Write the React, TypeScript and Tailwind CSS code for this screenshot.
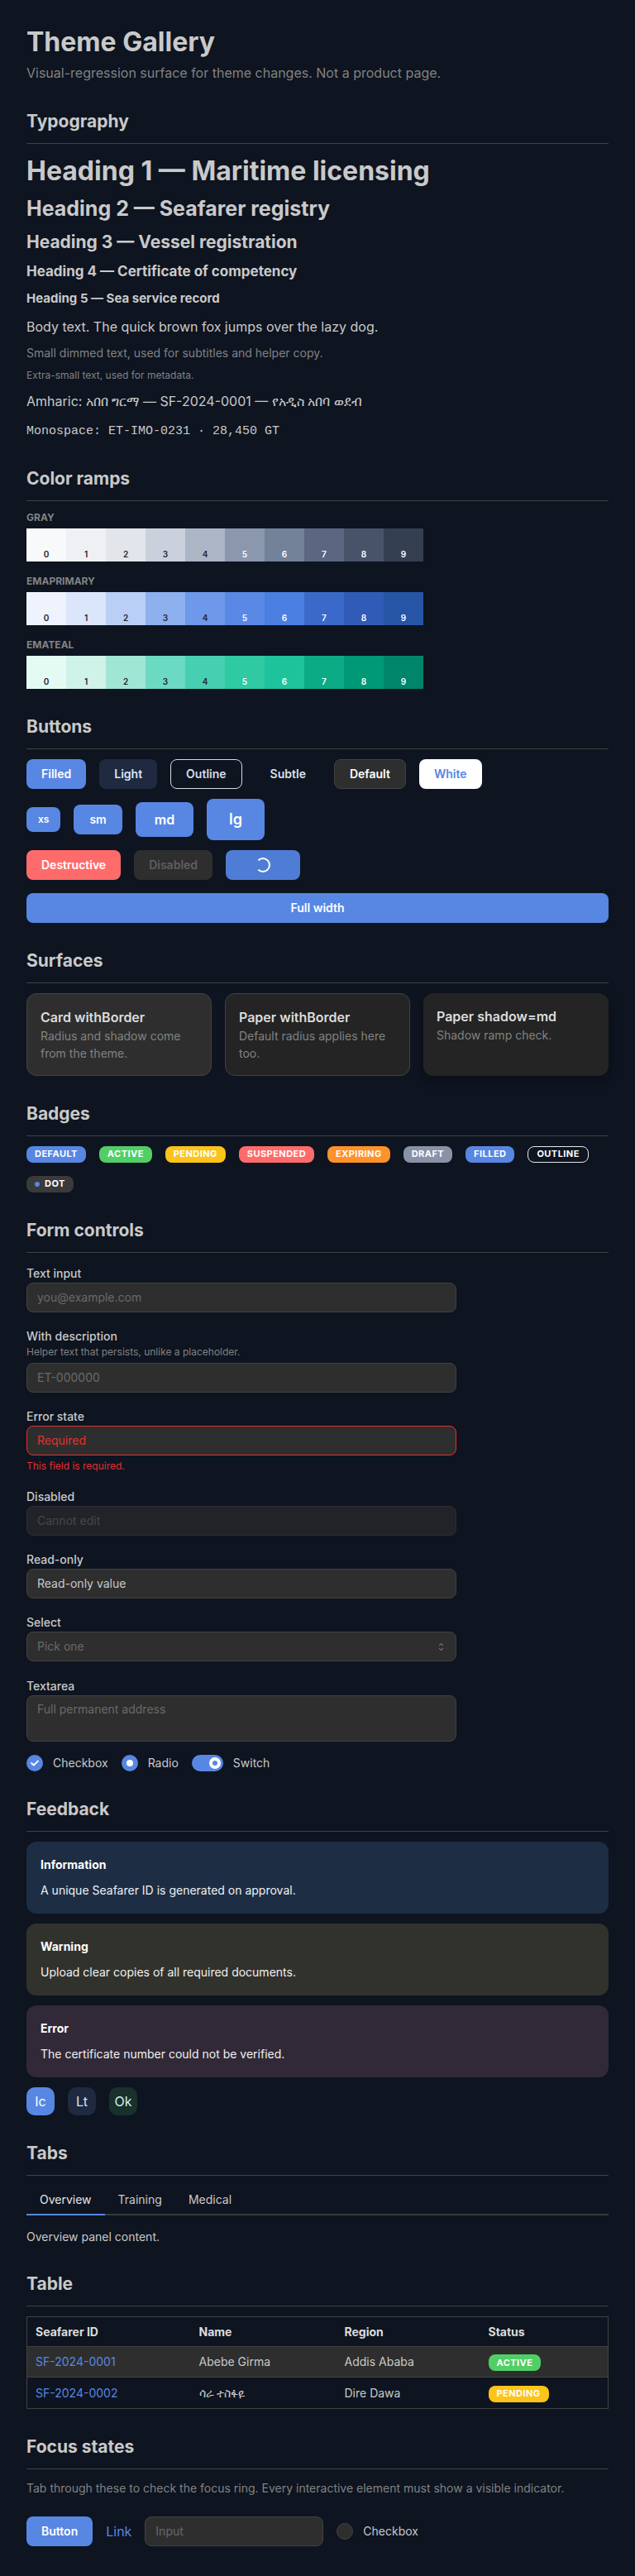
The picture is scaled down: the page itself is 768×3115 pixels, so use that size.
import React from "react";

type Ramp = { name: string; swatches: string[] };

const ramps: Ramp[] = [
  {
    name: "GRAY",
    swatches: [
      "bg-[#f8f9fb]",
      "bg-[#eef0f3]",
      "bg-[#e2e5ea]",
      "bg-[#cbd1dc]",
      "bg-[#abb5c6]",
      "bg-[#8b97ac]",
      "bg-[#738199]",
      "bg-[#5b6781]",
      "bg-[#475369]",
      "bg-[#343f52]",
    ],
  },
  {
    name: "EMAPRIMARY",
    swatches: [
      "bg-[#eef3fe]",
      "bg-[#dce6fb]",
      "bg-[#b9cff5]",
      "bg-[#8db0ee]",
      "bg-[#6e98e9]",
      "bg-[#5a89e5]",
      "bg-[#4b7fe2]",
      "bg-[#3b69c9]",
      "bg-[#305cb7]",
      "bg-[#2755a6]",
    ],
  },
  {
    name: "EMATEAL",
    swatches: [
      "bg-[#e4fbf4]",
      "bg-[#cff2e9]",
      "bg-[#a1e6d5]",
      "bg-[#6cd9c3]",
      "bg-[#46cfb1]",
      "bg-[#2fc9a2]",
      "bg-[#1fc39b]",
      "bg-[#0aab85]",
      "bg-[#009876]",
      "bg-[#00856b]",
    ],
  },
];

const badges: { label: string; cls: string }[] = [
  { label: "DEFAULT", cls: "bg-[#5787e3] text-white" },
  { label: "ACTIVE", cls: "bg-[#51cf66] text-white" },
  { label: "PENDING", cls: "bg-[#fcc419] text-white" },
  { label: "SUSPENDED", cls: "bg-[#ff6b6b] text-white" },
  { label: "EXPIRING", cls: "bg-[#ff922b] text-white" },
  { label: "DRAFT", cls: "bg-[#8992a6] text-white" },
  { label: "FILLED", cls: "bg-[#5787e3] text-white" },
  { label: "OUTLINE", cls: "border border-[#e5e7eb] text-white" },
];

function Section({ title, children }: { title: string; children: React.ReactNode }) {
  return (
    <section>
      <h2 className="text-[21px] leading-[27px] font-bold text-[#c9c9c9]">{title}</h2>
      <div className="mt-[13px] h-px bg-[#424242]" />
      <div className="mt-3">{children}</div>
    </section>
  );
}

function Badge({ label, cls }: { label: string; cls: string }) {
  return (
    <span
      className={`inline-flex h-5 items-center rounded-[8px] px-[10px] text-[11px] font-bold tracking-[0.45px] leading-none ${cls}`}
    >
      {label}
    </span>
  );
}

function Label({ children }: { children: React.ReactNode }) {
  return <div className="text-sm leading-[22px] font-medium text-[#c9c9c9]">{children}</div>;
}

function Field({
  children,
  className = "",
}: {
  children: React.ReactNode;
  className?: string;
}) {
  return (
    <div
      className={`flex h-9 w-full items-center rounded-lg border border-[#424242] bg-[#2e2e2e] px-3 text-sm ${className}`}
    >
      {children}
    </div>
  );
}

function CheckIcon() {
  return (
    <svg viewBox="0 0 10 7" className="h-[8px] w-[10px]" fill="none">
      <path
        d="M1 3.5L3.8 6L9 1"
        stroke="white"
        strokeWidth="1.8"
        strokeLinecap="round"
        strokeLinejoin="round"
      />
    </svg>
  );
}

function SortIcon() {
  return (
    <svg viewBox="0 0 15 15" className="h-[15px] w-[15px]" fill="#828282">
      <path d="M4.93179 5.43179C4.75605 5.60753 4.75605 5.89245 4.93179 6.06819C5.10753 6.24392 5.39245 6.24392 5.56819 6.06819L7.49999 4.13638L9.43179 6.06819C9.60753 6.24392 9.89245 6.24392 10.0682 6.06819C10.2439 5.89245 10.2439 5.60753 10.0682 5.43179L7.81819 3.18179C7.73379 3.0974 7.61933 3.04999 7.49999 3.04999C7.38064 3.04999 7.26618 3.0974 7.18179 3.18179L4.93179 5.43179ZM10.0682 9.56819C10.2439 9.39245 10.2439 9.10753 10.0682 8.93179C9.89245 8.75606 9.60753 8.75606 9.43179 8.93179L7.49999 10.8636L5.56819 8.93179C5.39245 8.75606 5.10753 8.75606 4.93179 8.93179C4.75605 9.10753 4.75605 9.39245 4.93179 9.56819L7.18179 11.8182C7.35753 11.9939 7.64245 11.9939 7.81819 11.8182L10.0682 9.56819Z" />
    </svg>
  );
}

export default function App() {
  return (
    <div className="min-h-screen bg-[#0e1420] px-8 pt-[30px] pb-8 font-['Inter','Noto_Sans',sans-serif] text-[#c9c9c9]">
      <header>
        <h1 className="text-[32px] leading-[42px] font-bold">Theme Gallery</h1>
        <p className="mt-1 text-base leading-[25px] text-[#828282]">
          Visual-regression surface for theme changes. Not a product page.
        </p>
      </header>

      <div className="mt-8 flex flex-col gap-8">
        <Section title="Typography">
          <div className="flex flex-col">
            <h1 className="text-[32px] leading-[41.6px] font-bold">Heading 1 — Maritime licensing</h1>
            <h2 className="mt-2 text-[25px] leading-[33.75px] font-bold">Heading 2 — Seafarer registry</h2>
            <h3 className="mt-[9px] text-[21px] leading-[29.4px] font-bold">Heading 3 — Vessel registration</h3>
            <h4 className="mt-2 text-[17px] leading-[24.65px] font-bold">
              Heading 4 — Certificate of competency
            </h4>
            <h5 className="mt-[10px] text-[15px] leading-[22.5px] font-bold">Heading 5 — Sea service record</h5>
            <p className="mt-[10px] text-base leading-[24.8px]">
              Body text. The quick brown fox jumps over the lazy dog.
            </p>
            <p className="mt-2 text-sm leading-[21.7px] text-[#828282]">
              Small dimmed text, used for subtitles and helper copy.
            </p>
            <p className="mt-2 text-xs leading-[18.6px] text-[#828282]">Extra-small text, used for metadata.</p>
            <p className="mt-[9px] text-base leading-[24.8px]">
              Amharic: አበበ ግርማ — SF-2024-0001 — የአዲስ አበባ ወደብ
            </p>
            <p className="mt-3 font-['Liberation_Mono',monospace] text-[15px] leading-[23px]">
              Monospace: ET-IMO-0231 · 28,450 GT
            </p>
          </div>
        </Section>

        <Section title="Color ramps">
          <div className="flex flex-col gap-[17px] pt-px">
            {ramps.map((ramp) => (
              <div key={ramp.name}>
                <div className="text-xs leading-[14px] font-bold text-[#828282]">{ramp.name}</div>
                <div className="mt-1.5 flex">
                  {ramp.swatches.map((cls, i) => (
                    <div
                      key={cls}
                      className={`flex h-10 w-12 items-end justify-center pb-[3px] text-[10px] leading-[12px] font-semibold ${cls} ${
                        i < 5 ? "text-[#1f2430]" : "text-white"
                      }`}
                    >
                      {i}
                    </div>
                  ))}
                </div>
              </div>
            ))}
          </div>
        </Section>

        <Section title="Buttons">
          <div className="flex flex-col">
            <div className="flex items-center gap-4">
              <button className="h-9 rounded-lg bg-[#5787e3] px-[18px] text-sm font-semibold text-white">
                Filled
              </button>
              <button className="h-9 rounded-lg bg-[#1f2a40] px-[18px] text-sm font-semibold text-[#dbe4f6]">
                Light
              </button>
              <button className="h-9 rounded-lg border border-[#d6dae2] px-[18px] text-sm font-semibold text-[#d3dcf0]">
                Outline
              </button>
              <button className="h-9 rounded-lg px-[18px] text-sm font-semibold text-[#dbe1ee]">Subtle</button>
              <button className="h-9 rounded-lg border border-[#424242] bg-[#2e2e2e] px-[18px] text-sm font-semibold text-white">
                Default
              </button>
              <button className="h-9 rounded-lg bg-white px-[18px] text-sm font-semibold text-[#5787e3]">
                White
              </button>
            </div>

            <div className="mt-3 flex items-center gap-4">
              <button className="h-[30px] rounded-lg bg-[#5787e3] px-[14px] text-xs font-semibold text-white">
                xs
              </button>
              <button className="h-9 rounded-lg bg-[#5787e3] px-[19px] text-sm font-semibold text-white">sm</button>
              <button className="h-[42px] rounded-lg bg-[#5787e3] px-[23px] text-base font-semibold text-white">
                md
              </button>
              <button className="h-[50px] rounded-lg bg-[#5787e3] px-[27px] text-lg font-semibold text-white">
                lg
              </button>
            </div>

            <div className="mt-3 flex items-center gap-4">
              <button className="h-9 rounded-lg bg-[#ff6b6b] px-[18px] text-sm font-semibold text-white">
                Destructive
              </button>
              <button className="h-9 rounded-lg bg-[#2e2e2e] px-[18px] text-sm font-semibold text-[#5f5f5f]">
                Disabled
              </button>
              <button className="relative h-9 rounded-lg bg-[#4f7dd5] px-[18px] text-sm font-semibold">
                <span className="invisible">Loading</span>
                <span className="absolute inset-0 flex items-center justify-center">
                  <span className="h-[18px] w-[18px] rounded-full border-2 border-white border-l-transparent" />
                </span>
              </button>
            </div>

            <button className="mt-4 h-9 w-full rounded-lg bg-[#5787e3] text-sm font-semibold text-white">
              Full width
            </button>
          </div>
        </Section>

        <Section title="Surfaces">
          <div className="grid grid-cols-3 gap-4">
            <div className="rounded-xl border border-[#424242] bg-[#2e2e2e] p-4">
              <div className="text-base leading-6 font-semibold text-[#dcdcdc]">Card withBorder</div>
              <div className="text-sm leading-[21px] text-[#828282]">Radius and shadow come from the theme.</div>
            </div>
            <div className="rounded-xl border border-[#424242] bg-[#242424] p-4">
              <div className="text-base leading-6 font-semibold text-[#dcdcdc]">Paper withBorder</div>
              <div className="text-sm leading-[21px] text-[#828282]">Default radius applies here too.</div>
            </div>
            <div className="rounded-xl bg-[#242424] p-4 shadow-[0_4px_12px_rgba(0,0,0,0.35)]">
              <div className="text-base leading-6 font-semibold text-[#dcdcdc]">Paper shadow=md</div>
              <div className="text-sm leading-[21px] text-[#828282]">Shadow ramp check.</div>
            </div>
          </div>
        </Section>

        <Section title="Badges">
          <div className="flex flex-wrap gap-4">
            {badges.map((b) => (
              <Badge key={b.label} label={b.label} cls={b.cls} />
            ))}
            <span className="inline-flex h-5 items-center gap-[6px] rounded-[8px] bg-[#3a3a3a] px-[10px] text-[11px] font-bold tracking-[0.45px] leading-none text-white">
              <span className="h-[6px] w-[6px] rounded-full bg-[#5787e3]" />
              DOT
            </span>
          </div>
        </Section>

        <Section title="Form controls">
          <div className="flex max-w-[520px] flex-col gap-[18.3px] pt-[2px]">
            <div>
              <Label>Text input</Label>
              <Field>
                <span className="text-[#696969]">you@example.com</span>
              </Field>
            </div>

            <div>
              <Label>With description</Label>
              <div className="text-xs leading-[15px] text-[#828282]">
                Helper text that persists, unlike a placeholder.
              </div>
              <div className="mt-[6px]">
                <Field>
                  <span className="text-[#696969]">ET-000000</span>
                </Field>
              </div>
            </div>

            <div>
              <Label>Error state</Label>
              <Field className="border-[#e03131]">
                <span className="text-[#e03131]">Required</span>
              </Field>
              <div className="mt-[5px] text-xs leading-[15px] text-[#e03131]">This field is required.</div>
            </div>

            <div>
              <Label>Disabled</Label>
              <Field className="opacity-60">
                <span className="text-[#696969]">Cannot edit</span>
              </Field>
            </div>

            <div>
              <Label>Read-only</Label>
              <Field>
                <span className="text-[#c9c9c9]">Read-only value</span>
              </Field>
            </div>

            <div>
              <Label>Select</Label>
              <Field className="justify-between pr-[10px]">
                <span className="text-[#696969]">Pick one</span>
                <SortIcon />
              </Field>
            </div>

            <div>
              <Label>Textarea</Label>
              <div className="h-[56px] w-full rounded-lg border border-[#424242] bg-[#2e2e2e] px-3 pt-[5px] text-sm leading-[22px] text-[#696969]">
                Full permanent address
              </div>
            </div>
          </div>

          <div className="mt-4 flex items-center gap-4 text-sm leading-5">
            <div className="flex items-center gap-3">
              <span className="flex h-5 w-5 items-center justify-center rounded-full bg-[#5787e3]">
                <CheckIcon />
              </span>
              <span>Checkbox</span>
            </div>
            <div className="flex items-center gap-3">
              <span className="flex h-5 w-5 items-center justify-center rounded-full bg-[#5787e3]">
                <span className="h-[8px] w-[8px] rounded-full bg-white" />
              </span>
              <span>Radio</span>
            </div>
            <div className="flex items-center gap-3">
              <span className="flex h-5 w-[38px] items-center justify-end rounded-full bg-[#5787e3] px-[3px]">
                <span className="flex h-[14px] w-[14px] items-center justify-center rounded-full bg-white">
                  <span className="h-[6px] w-[6px] rounded-full bg-[#5787e3]" />
                </span>
              </span>
              <span>Switch</span>
            </div>
          </div>
        </Section>

        <Section title="Feedback">
          <div className="flex flex-col gap-3">
            <div className="rounded-xl border border-transparent bg-[#1c2d44] px-4 pt-4 pb-4">
              <div className="text-sm leading-[22px] font-bold text-white">Information</div>
              <div className="mt-[9px] text-sm leading-[22px] text-[#f0f0f0]">
                A unique Seafarer ID is generated on approval.
              </div>
            </div>
            <div className="rounded-xl border border-transparent bg-[#32322c] px-4 pt-4 pb-4">
              <div className="text-sm leading-[22px] font-bold text-white">Warning</div>
              <div className="mt-[9px] text-sm leading-[22px] text-[#f0f0f0]">
                Upload clear copies of all required documents.
              </div>
            </div>
            <div className="rounded-xl border border-transparent bg-[#312937] px-4 pt-4 pb-4">
              <div className="text-sm leading-[22px] font-bold text-white">Error</div>
              <div className="mt-[9px] text-sm leading-[22px] text-[#f0f0f0]">
                The certificate number could not be verified.
              </div>
            </div>
            <div className="flex gap-4">
              <span className="flex h-[34px] w-[34px] items-center justify-center rounded-[10px] bg-[#5787e3] text-base text-white">
                Ic
              </span>
              <span className="flex h-[34px] w-[34px] items-center justify-center rounded-[10px] bg-[#1f2a40] text-base text-[#d7e0f3]">
                Lt
              </span>
              <span className="flex h-[34px] w-[34px] items-center justify-center rounded-[10px] bg-[#19302d] text-base text-[#d3efe7]">
                Ok
              </span>
            </div>
          </div>
        </Section>

        <Section title="Tabs">
          <div className="flex border-b-2 border-[#3a3a3a]">
            <div className="-mb-[2px] border-b-2 border-[#5787e3] px-4 py-[10px] text-sm leading-[14px] text-[#e6e6e6]">
              Overview
            </div>
            <div className="-mb-[2px] border-b-2 border-transparent px-4 py-[10px] text-sm leading-[14px] text-[#c9c9c9]">
              Training
            </div>
            <div className="-mb-[2px] border-b-2 border-transparent px-4 py-[10px] text-sm leading-[14px] text-[#c9c9c9]">
              Medical
            </div>
          </div>
          <p className="mt-[15px] text-sm leading-[22px]">Overview panel content.</p>
        </Section>

        <Section title="Table">
          <table className="w-full border-collapse border border-[#424242] text-left text-sm leading-[21px]">
            <thead>
              <tr className="border-b border-[#424242]">
                <th className="w-[198px] px-[10px] py-[7px] font-bold text-[#dcdcdc]">Seafarer ID</th>
                <th className="w-[176px] px-[10px] py-[7px] font-bold text-[#dcdcdc]">Name</th>
                <th className="w-[174px] px-[10px] py-[7px] font-bold text-[#dcdcdc]">Region</th>
                <th className="px-[10px] py-[7px] font-bold text-[#dcdcdc]">Status</th>
              </tr>
            </thead>
            <tbody>
              <tr className="border-b border-[#424242] bg-[#2e2e2e]">
                <td className="px-[10px] py-[7px] text-[#5787e3]">SF-2024-0001</td>
                <td className="px-[10px] py-[7px]">Abebe Girma</td>
                <td className="px-[10px] py-[7px]">Addis Ababa</td>
                <td className="px-[10px] py-[7px]">
                  <Badge label="ACTIVE" cls="bg-[#51cf66] text-white" />
                </td>
              </tr>
              <tr>
                <td className="px-[10px] py-[7px] text-[#5787e3]">SF-2024-0002</td>
                <td className="px-[10px] py-[7px]">ሳራ ተስፋዬ</td>
                <td className="px-[10px] py-[7px]">Dire Dawa</td>
                <td className="px-[10px] py-[7px]">
                  <Badge label="PENDING" cls="bg-[#fcc419] text-white" />
                </td>
              </tr>
            </tbody>
          </table>
        </Section>

        <Section title="Focus states">
          <p className="text-sm leading-[22px] text-[#828282]">
            Tab through these to check the focus ring. Every interactive element must show a visible indicator.
          </p>
          <div className="mt-[23px] flex items-center gap-4">
            <button className="h-9 rounded-lg bg-[#5787e3] px-[18px] text-sm font-semibold text-white">Button</button>
            <a className="text-base text-[#5787e3]">Link</a>
            <div className="flex h-9 w-[216px] items-center rounded-lg border border-[#424242] bg-[#2e2e2e] px-3 text-sm text-[#696969]">
              Input
            </div>
            <div className="flex items-center gap-3 text-sm">
              <span className="h-5 w-5 rounded-full border border-[#424242] bg-[#2e2e2e]" />
              <span>Checkbox</span>
            </div>
          </div>
        </Section>
      </div>
    </div>
  );
}
